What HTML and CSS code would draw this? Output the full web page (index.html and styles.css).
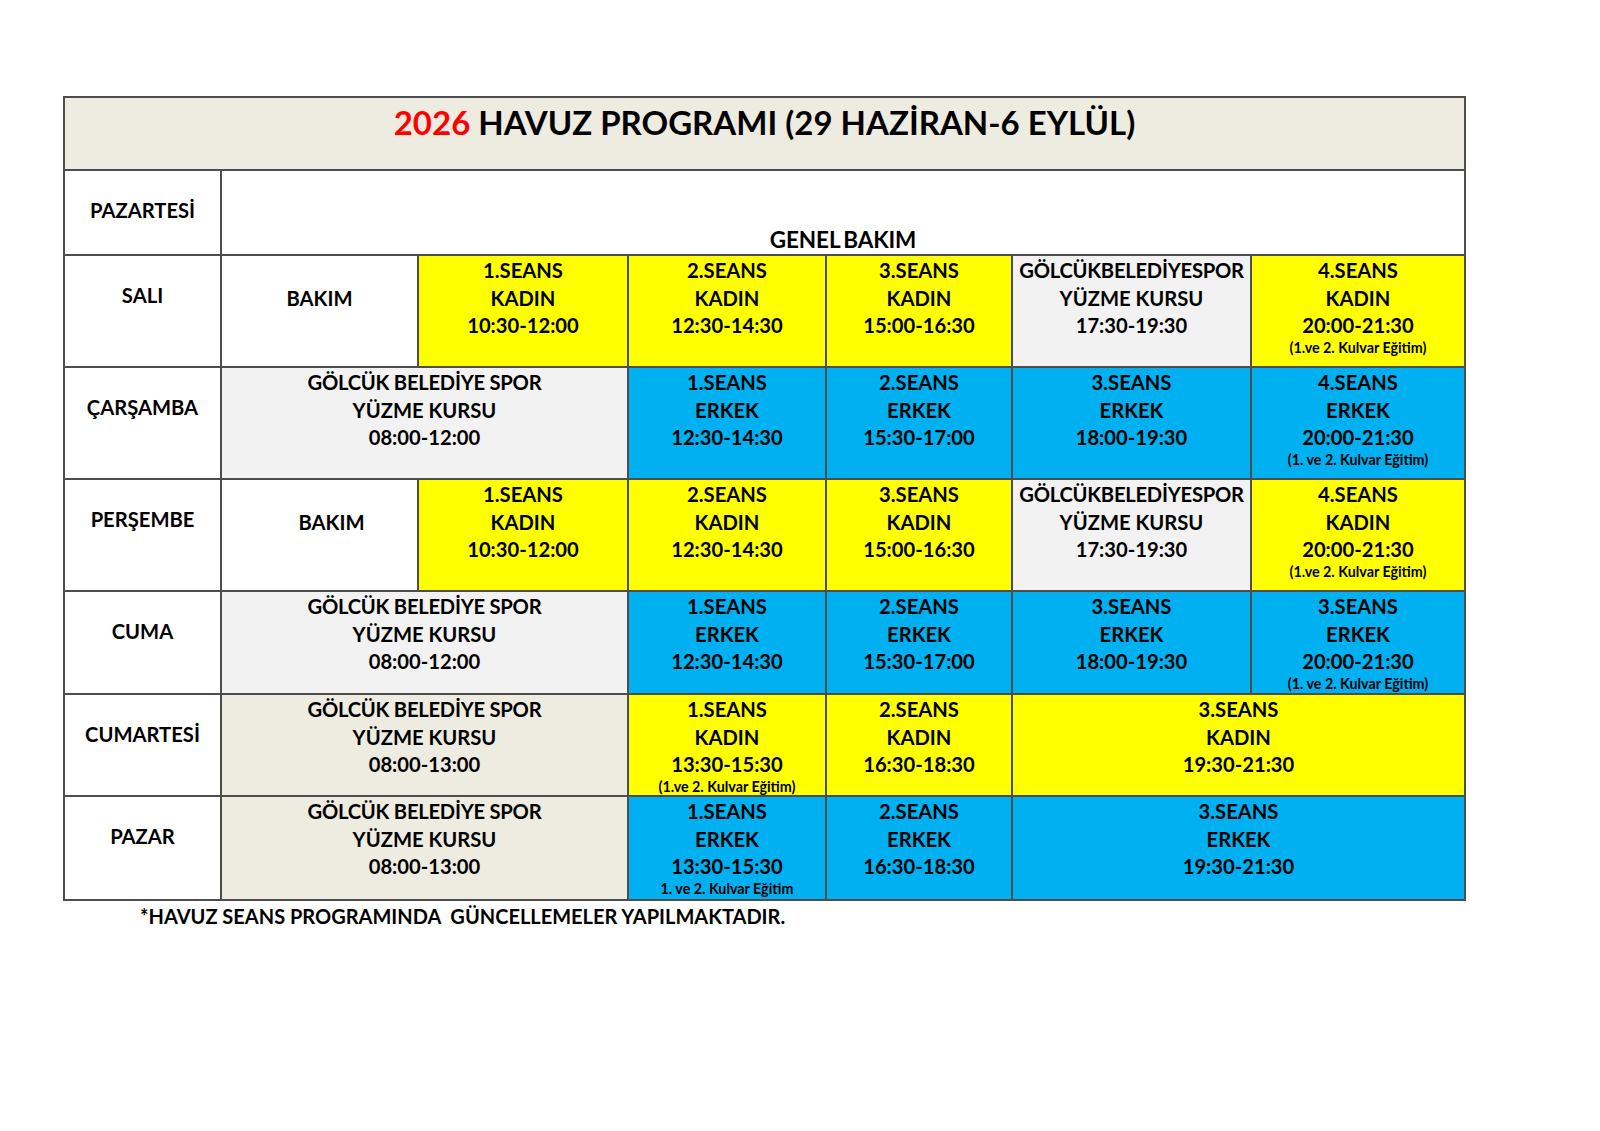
FILE: index.html
```html
<!DOCTYPE html>
<html lang="tr">
<head>
<meta charset="utf-8">
<title>2026 Havuz Programı</title>
<link rel="stylesheet" href="styles.css">
</head>
<body>
<main class="sheet">
  <div class="grid">
    <div class="c title"><span class="red">2026</span> HAVUZ PROGRAMI (29 HAZİRAN-6 EYLÜL)</div>

    <div class="c day">PAZARTESİ</div>
    <div class="c genel span6">GENEL BAKIM</div>

    <div class="c day">SALI</div>
    <div class="c bakim">BAKIM</div>
    <div class="c y"><div>1.SEANS</div><div>KADIN</div><div>10:30-12:00</div></div>
    <div class="c y"><div>2.SEANS</div><div>KADIN</div><div>12:30-14:30</div></div>
    <div class="c y"><div>3.SEANS</div><div>KADIN</div><div>15:00-16:30</div></div>
    <div class="c g"><div class="tight">GÖLCÜKBELEDİYESPOR</div><div>YÜZME KURSU</div><div>17:30-19:30</div></div>
    <div class="c y"><div>4.SEANS</div><div>KADIN</div><div>20:00-21:30</div><div class="note">(1.ve 2. Kulvar Eğitim)</div></div>

    <div class="c day">ÇARŞAMBA</div>
    <div class="c g span2"><div class="tight">GÖLCÜK BELEDİYE SPOR</div><div>YÜZME KURSU</div><div>08:00-12:00</div></div>
    <div class="c b"><div>1.SEANS</div><div>ERKEK</div><div>12:30-14:30</div></div>
    <div class="c b"><div>2.SEANS</div><div>ERKEK</div><div>15:30-17:00</div></div>
    <div class="c b"><div>3.SEANS</div><div>ERKEK</div><div>18:00-19:30</div></div>
    <div class="c b"><div>4.SEANS</div><div>ERKEK</div><div>20:00-21:30</div><div class="note">(1. ve 2. Kulvar Eğitim)</div></div>

    <div class="c day">PERŞEMBE</div>
    <div class="c bakim shift">BAKIM</div>
    <div class="c y"><div>1.SEANS</div><div>KADIN</div><div>10:30-12:00</div></div>
    <div class="c y"><div>2.SEANS</div><div>KADIN</div><div>12:30-14:30</div></div>
    <div class="c y"><div>3.SEANS</div><div>KADIN</div><div>15:00-16:30</div></div>
    <div class="c g"><div class="tight">GÖLCÜKBELEDİYESPOR</div><div>YÜZME KURSU</div><div>17:30-19:30</div></div>
    <div class="c y"><div>4.SEANS</div><div>KADIN</div><div>20:00-21:30</div><div class="note">(1.ve 2. Kulvar Eğitim)</div></div>

    <div class="c day">CUMA</div>
    <div class="c g span2"><div class="tight">GÖLCÜK BELEDİYE SPOR</div><div>YÜZME KURSU</div><div>08:00-12:00</div></div>
    <div class="c b"><div>1.SEANS</div><div>ERKEK</div><div>12:30-14:30</div></div>
    <div class="c b"><div>2.SEANS</div><div>ERKEK</div><div>15:30-17:00</div></div>
    <div class="c b"><div>3.SEANS</div><div>ERKEK</div><div>18:00-19:30</div></div>
    <div class="c b"><div>3.SEANS</div><div>ERKEK</div><div>20:00-21:30</div><div class="note">(1. ve 2. Kulvar Eğitim)</div></div>

    <div class="c day">CUMARTESİ</div>
    <div class="c bg span2"><div class="tight">GÖLCÜK BELEDİYE SPOR</div><div>YÜZME KURSU</div><div>08:00-13:00</div></div>
    <div class="c y"><div>1.SEANS</div><div>KADIN</div><div>13:30-15:30</div><div class="note">(1.ve 2. Kulvar Eğitim)</div></div>
    <div class="c y"><div>2.SEANS</div><div>KADIN</div><div>16:30-18:30</div></div>
    <div class="c y span2"><div>3.SEANS</div><div>KADIN</div><div>19:30-21:30</div></div>

    <div class="c day">PAZAR</div>
    <div class="c bg span2"><div class="tight">GÖLCÜK BELEDİYE SPOR</div><div>YÜZME KURSU</div><div>08:00-13:00</div></div>
    <div class="c b"><div>1.SEANS</div><div>ERKEK</div><div>13:30-15:30</div><div class="note">1. ve 2. Kulvar Eğitim</div></div>
    <div class="c b"><div>2.SEANS</div><div>ERKEK</div><div>16:30-18:30</div></div>
    <div class="c b span2"><div>3.SEANS</div><div>ERKEK</div><div>19:30-21:30</div></div>
  </div>
  <p class="footnote">*HAVUZ SEANS PROGRAMINDA  GÜNCELLEMELER YAPILMAKTADIR.</p>
</main>
</body>
</html>
```
FILE: styles.css
```css
body {
  margin: 0;
  background: #ffffff;
  color: #000000;
  font-family: "Lato", "Open Sans", sans-serif;
}

.sheet {
  padding-top: 96px;
  padding-left: 63px;
}

.grid {
  display: grid;
  width: max-content;
  grid-template-columns: 157px 197px 210px 198px 186px 239px 214px;
  grid-template-rows: 73px 85px 112px 112px 112px 103px 102px 104px;
  border-top: 2px solid #4d4d4d;
  border-left: 2px solid #4d4d4d;
}

.c {
  border-right: 2px solid #4d4d4d;
  border-bottom: 2px solid #4d4d4d;
  text-align: center;
  font-weight: 700;
  font-size: 20.2px;
  line-height: 27.5px;
  background: #ffffff;
  overflow: hidden;
  padding-top: 1px;
}

.tight { letter-spacing: -0.25px; }

.span2 { grid-column: span 2; }
.span6 { grid-column: span 6; }

.title {
  grid-column: 1 / -1;
  background: #eeece1;
  font-size: 33px;
  line-height: 40px;
  padding-top: 4px;
}

.red { color: #ff0000; }

.day { padding-top: 26px; }

.bakim { padding-top: 29px; }
.bakim.shift { padding-left: 24px; }

.genel {
  display: flex;
  align-items: flex-end;
  justify-content: center;
  padding-bottom: 1px;
  font-size: 22.5px;
  letter-spacing: -0.1px;
  word-spacing: -2px;
}

.y { background: #ffff00; }
.b { background: #00b0f0; }
.g { background: #f2f2f2; }
.bg { background: #eeece1; }

.note {
  font-size: 14.3px;
  line-height: 16px;
}

.footnote {
  margin: 2px 0 0 77px;
  font-weight: 700;
  font-size: 20px;
  line-height: 26px;
  white-space: pre;
}
```
